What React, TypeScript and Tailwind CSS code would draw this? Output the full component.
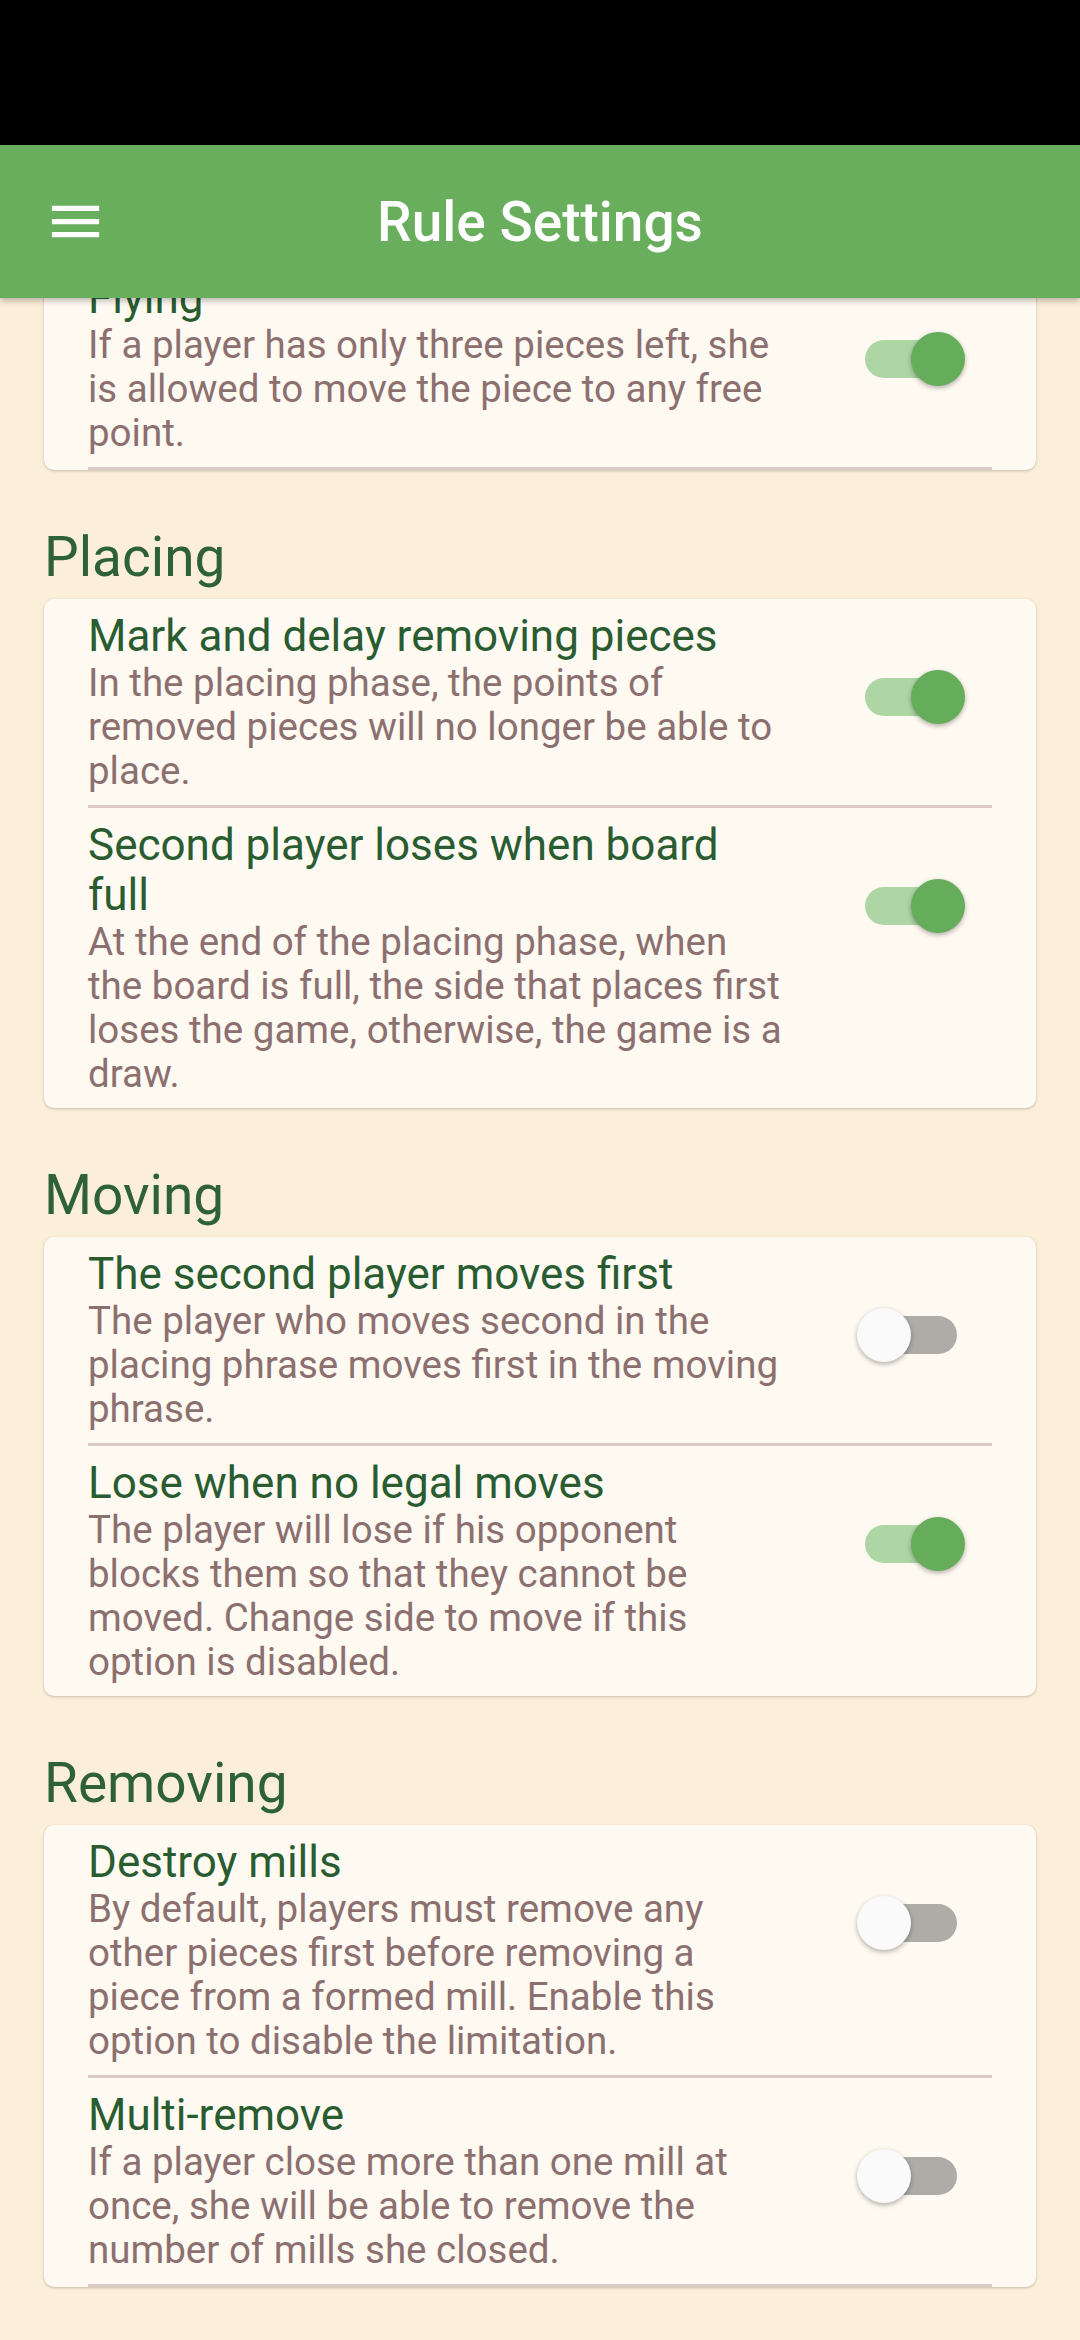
import React from "react";

type Item = {
  title: string[];
  desc: string[];
  on: boolean;
};

type Section = {
  heading?: string;
  items: Item[];
  trailingDivider: boolean;
};

const sections: Section[] = [
  {
    items: [
      {
        title: ["Flying"],
        desc: [
          "If a player has only three pieces left, she",
          "is allowed to move the piece to any free",
          "point.",
        ],
        on: true,
      },
    ],
    trailingDivider: true,
  },
  {
    heading: "Placing",
    items: [
      {
        title: ["Mark and delay removing pieces"],
        desc: [
          "In the placing phase, the points of",
          "removed pieces will no longer be able to",
          "place.",
        ],
        on: true,
      },
      {
        title: ["Second player loses when board", "full"],
        desc: [
          "At the end of the placing phase, when",
          "the board is full, the side that places first",
          "loses the game, otherwise, the game is a",
          "draw.",
        ],
        on: true,
      },
    ],
    trailingDivider: false,
  },
  {
    heading: "Moving",
    items: [
      {
        title: ["The second player moves first"],
        desc: [
          "The player who moves second in the",
          "placing phrase moves first in the moving",
          "phrase.",
        ],
        on: false,
      },
      {
        title: ["Lose when no legal moves"],
        desc: [
          "The player will lose if his opponent",
          "blocks them so that they cannot be",
          "moved. Change side to move if this",
          "option is disabled.",
        ],
        on: true,
      },
    ],
    trailingDivider: false,
  },
  {
    heading: "Removing",
    items: [
      {
        title: ["Destroy mills"],
        desc: [
          "By default, players must remove any",
          "other pieces first before removing a",
          "piece from a formed mill. Enable this",
          "option to disable the limitation.",
        ],
        on: false,
      },
      {
        title: ["Multi-remove"],
        desc: [
          "If a player close more than one mill at",
          "once, she will be able to remove the",
          "number of mills she closed.",
        ],
        on: false,
      },
    ],
    trailingDivider: true,
  },
];

function Lines({ lines }: { lines: string[] }) {
  return (
    <>
      {lines.map((l, i) => (
        <React.Fragment key={i}>
          {i > 0 && <br />}
          {l}
        </React.Fragment>
      ))}
    </>
  );
}

function Toggle({ on }: { on: boolean }) {
  return (
    <div
      className={
        on
          ? "relative w-[92px] h-[38px] rounded-full bg-[#aed5a4]"
          : "relative w-[92px] h-[38px] rounded-full bg-[#adaca7]"
      }
    >
      <div
        className={
          on
            ? "absolute top-[-8px] left-[46px] w-[54px] h-[54px] rounded-full bg-[#66ad5b] shadow-[0_2px_5px_rgba(0,0,0,0.3)]"
            : "absolute top-[-8px] left-[-8px] w-[54px] h-[54px] rounded-full bg-[#fafafa] shadow-[0_2px_5px_rgba(0,0,0,0.3)]"
        }
      />
    </div>
  );
}

function Divider() {
  return <div className="mx-[44px] h-[3px] bg-[#dccbc5]" />;
}

function Row({ item }: { item: Item }) {
  return (
    <div className="flex items-start py-[12px] pl-[44px]">
      <div className="w-[720px] whitespace-nowrap">
        <div className="text-[44px] leading-[50px] text-[#2a5c31]">
          <Lines lines={item.title} />
        </div>
        <div className="text-[38.5px] leading-[44px] text-[#8c7070]">
          <Lines lines={item.desc} />
        </div>
      </div>
      <div className="ml-[57px] mt-[67px]">
        <Toggle on={item.on} />
      </div>
    </div>
  );
}

function Card({ section }: { section: Section }) {
  return (
    <div className="rounded-[10px] bg-[#fef9f1] shadow-[0_1px_3px_rgba(0,0,0,0.22)] overflow-hidden">
      {section.items.map((it, i) => (
        <React.Fragment key={i}>
          {i > 0 && <Divider />}
          <Row item={it} />
        </React.Fragment>
      ))}
      {section.trailingDivider && <Divider />}
    </div>
  );
}

export default function App() {
  return (
    <div className="w-[1080px] h-[2340px] flex flex-col overflow-hidden bg-[#fbefd9] font-['Roboto',sans-serif]">
      <div className="h-[145px] shrink-0 bg-black" />
      <header className="relative z-10 h-[153px] shrink-0 bg-[#68ae5d] shadow-[0_3px_6px_rgba(0,0,0,0.25)] grid grid-cols-[140px_1fr_140px] items-center">
        <div className="pl-[44px] flex items-center">
          <svg width="63" height="63" viewBox="0 0 24 24" fill="#ffffff">
            <path d="M3 18h18v-2H3v2zm0-5h18v-2H3v2zm0-7v2h18V6H3z" />
          </svg>
        </div>
        <h1 className="text-center text-white text-[55px] font-medium leading-[64px]">
          Rule Settings
        </h1>
        <div />
      </header>
      <main className="flex-1 overflow-hidden">
        <div className="mt-[-37px] px-[44px]">
          {sections.map((s, i) => (
            <section key={i}>
              {s.heading && (
                <h2 className="mt-[54px] mb-[9px] text-[55px] leading-[66px] text-[#2e6236]">
                  {s.heading}
                </h2>
              )}
              <Card section={s} />
            </section>
          ))}
        </div>
      </main>
    </div>
  );
}
